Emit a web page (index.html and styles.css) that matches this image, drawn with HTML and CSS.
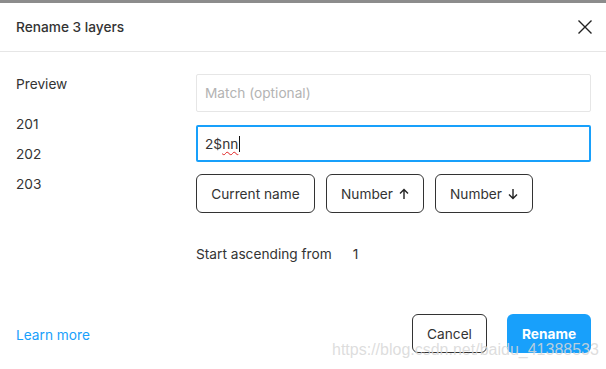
FILE: index.html
```html
<!DOCTYPE html>
<html>
<head>
<meta charset="utf-8">
<link rel="stylesheet" href="styles.css">
</head>
<body>
<div class="topbar"></div>
<div class="dialog">
  <div class="header">
    <div class="title">Rename 3 layers</div>
    <svg class="close" width="16" height="16" viewBox="0 0 16 16"><path d="M1.5 1.5 L14.5 14.5 M14.5 1.5 L1.5 14.5" stroke="#222" stroke-width="1.4" fill="none"/></svg>
  </div>
  <div class="body">
    <div class="preview">
      <div class="prev-label">Preview</div>
      <div class="prev-item">201</div>
      <div class="prev-item">202</div>
      <div class="prev-item">203</div>
    </div>
    <div class="form">
      <div class="input match">Match (optional)</div>
      <div class="input name">2$<span class="typo">nn</span><span class="caret"></span></div>
      <div class="chips">
        <div class="chip">Current name</div>
        <div class="chip">Number <svg width="10" height="12" viewBox="0 0 10 12"><path d="M5 11 V1.5 M1 5.5 L5 1.5 L9 5.5" stroke="#222" stroke-width="1.4" fill="none"/></svg></div>
        <div class="chip">Number <svg width="10" height="12" viewBox="0 0 10 12"><path d="M5 1 V10.5 M1 6.5 L5 10.5 L9 6.5" stroke="#222" stroke-width="1.4" fill="none"/></svg></div>
      </div>
      <div class="start"><span>Start ascending from</span><span class="start-num">1</span></div>
    </div>
  </div>
  <div class="footer">
    <div class="learn">Learn more</div>
    <div class="actions">
      <div class="btn cancel">Cancel</div>
      <div class="btn rename">Rename</div>
    </div>
  </div>
  <div class="watermark">https://blog.csdn.net/baidu_41388533</div>
</div>
</body>
</html>
```
FILE: styles.css
```css
html, body {
  margin: 0;
  padding: 0;
  background: #fff;
}
body {
  width: 606px;
  height: 369px;
  overflow: hidden;
  font-family: Inter, "Noto Sans", sans-serif;
  font-size: 13.7px;
  color: #333;
}
.topbar {
  height: 3px;
  background: #8c8c8c;
}
.dialog {
  position: relative;
}
.header {
  height: 48px;
  border-bottom: 1px solid #e6e6e6;
  display: flex;
  align-items: center;
  justify-content: space-between;
  padding: 0 13px 0 16px;
}
.title {
  font-weight: 500;
  color: #333;
}
.close {
  display: block;
}
.body {
  display: flex;
  padding-top: 22px;
}
.preview {
  width: 180px;
  padding-left: 16px;
}
.prev-label {
  line-height: 20px;
  margin-bottom: 20px;
}
.prev-item {
  line-height: 20px;
  margin-bottom: 10px;
}
.form {
  width: 395px;
}
.input {
  box-sizing: border-box;
  display: flex;
  align-items: center;
  padding-left: 8px;
  border-radius: 2px;
}
.match {
  height: 38px;
  border: 1px solid #e6e6e6;
  color: #b3b3b3;
}
.name {
  margin-top: 13px;
  height: 37px;
  border: 2px solid #18a0fb;
  padding-left: 7px;
  color: #333;
}
.typo {
  text-decoration: underline wavy #e02020;
  text-decoration-thickness: 1px;
  text-underline-offset: 2px;
}
.caret {
  display: inline-block;
  width: 1px;
  height: 16px;
  background: #111;
  margin-left: 1px;
}
.chips {
  display: flex;
  gap: 11px;
  margin-top: 12px;
}
.chip {
  box-sizing: border-box;
  height: 39px;
  border: 1px solid #333;
  border-radius: 6px;
  display: flex;
  align-items: center;
  justify-content: center;
  gap: 6px;
  padding: 0 12px;
  color: #333;
}
.chip:first-child {
  width: 119px;
}
.chip:nth-child(2), .chip:nth-child(3) {
  width: 98px;
}
.start {
  margin-top: 31px;
  line-height: 20px;
  display: flex;
  gap: 21px;
}
.footer {
  margin-top: 50px;
  display: flex;
  align-items: center;
  justify-content: space-between;
  padding: 0 15px 0 16px;
}
.learn {
  color: #18a0fb;
  padding-top: 3px;
}
.actions {
  display: flex;
  gap: 20px;
}
.btn {
  box-sizing: border-box;
  height: 39px;
  border-radius: 6px;
  display: flex;
  align-items: center;
  justify-content: center;
}
.cancel {
  width: 75px;
  border: 1px solid #333;
  color: #333;
}
.rename {
  width: 84px;
  background: #18a0fb;
  color: #fff;
  font-weight: 700;
}
.watermark {
  position: absolute;
  left: 332px;
  top: 338px;
  font-family: "Liberation Sans", Arial, sans-serif;
  font-size: 16px;
  color: rgba(215, 215, 215, 0.85);
  white-space: nowrap;
}
```
